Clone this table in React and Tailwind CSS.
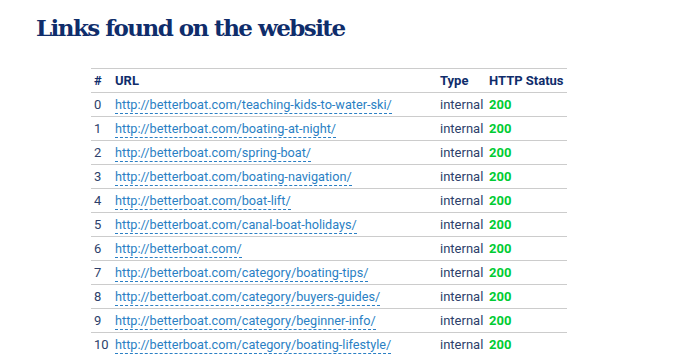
import React from 'react';

const links = [
  'http://betterboat.com/teaching-kids-to-water-ski/',
  'http://betterboat.com/boating-at-night/',
  'http://betterboat.com/spring-boat/',
  'http://betterboat.com/boating-navigation/',
  'http://betterboat.com/boat-lift/',
  'http://betterboat.com/canal-boat-holidays/',
  'http://betterboat.com/',
  'http://betterboat.com/category/boating-tips/',
  'http://betterboat.com/category/buyers-guides/',
  'http://betterboat.com/category/beginner-info/',
  'http://betterboat.com/category/boating-lifestyle/',
];

function App() {
  return (
    <div className="min-h-screen bg-white font-['Roboto',sans-serif] overflow-hidden">
      <h1 className="pl-[36px] pt-[12px] text-[23px] leading-[32px] font-bold text-[#0f2d6b] font-['DejaVu_Serif',serif] tracking-[-1.55px]">
        Links found on the website
      </h1>
      <table className="ml-[91px] mt-[24px] w-[476px] border-collapse text-[13px] text-[#2d3f6b]">
        <thead>
          <tr className="border-t border-b border-[#cccccc] h-[24px]">
            <th className="w-[21px] pl-[3px] text-left font-bold text-[#0f2d6b]">#</th>
            <th className="w-[325px] pl-[3px] text-left font-bold text-[#0f2d6b]">URL</th>
            <th className="w-[49px] pl-[3px] text-left font-bold text-[#0f2d6b]">Type</th>
            <th className="pl-[3px] text-left font-bold text-[#0f2d6b]">HTTP Status</th>
          </tr>
        </thead>
        <tbody>
          {links.map((url, i) => (
            <tr key={url} className="border-b border-[#cccccc] h-[24px]">
              <td className="pl-[3px]">{i}</td>
              <td className="pl-[3px]">
                <a href={url} className="pb-[1px] text-[12.7px] text-[#2a7fc4] border-b border-dashed border-[#2a7fc4]">{url}</a>
              </td>
              <td className="pl-[3px]">internal</td>
              <td className="pl-[3px] font-bold text-[#00cc33]">200</td>
            </tr>
          ))}
        </tbody>
      </table>
    </div>
  );
}

export default App;
